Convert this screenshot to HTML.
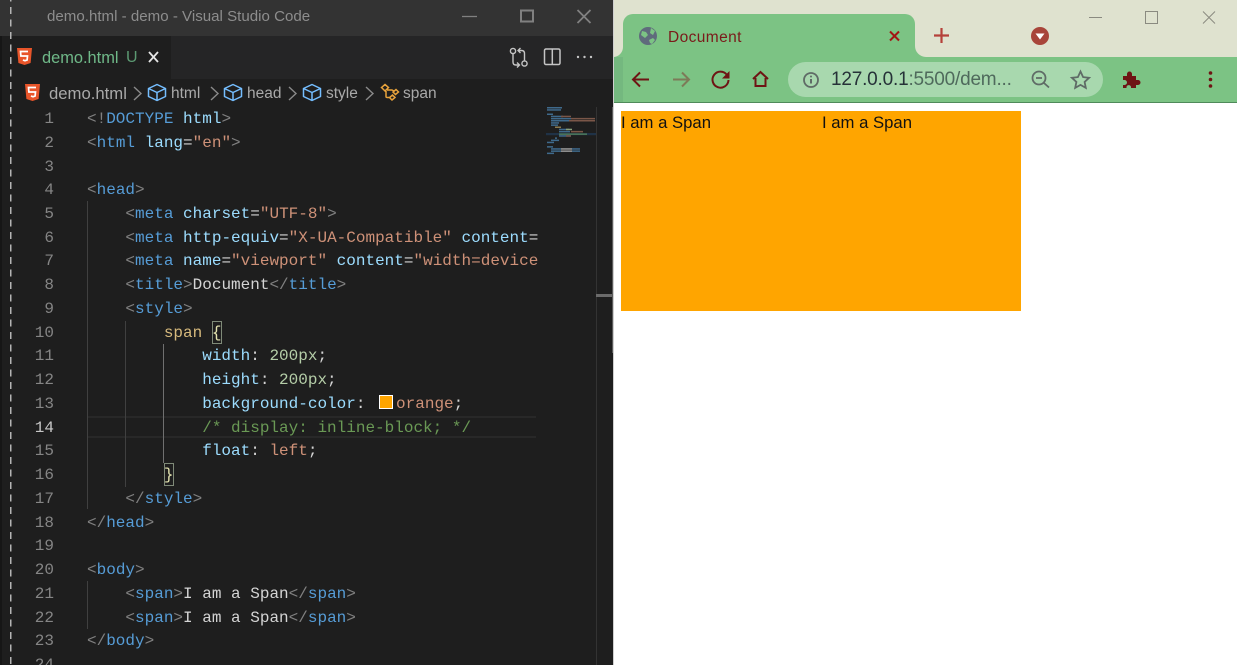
<!DOCTYPE html>
<html><head><meta charset="utf-8"><style>
*{margin:0;padding:0;box-sizing:border-box}
html,body{width:1237px;height:665px;overflow:hidden;background:#fff;font-family:"Liberation Sans",sans-serif}
.a{position:absolute}
#code{position:absolute;left:87px;top:1px;width:451px;height:664px;overflow:hidden;font:16px/24px "Liberation Mono",monospace;color:#d4d4d4;white-space:pre}
#code div{position:absolute;left:0;height:24px}
.n{position:absolute;width:30px;left:24px;margin-top:1px;text-align:right;font:16px/24px "Liberation Mono",monospace;color:#858585}
.g{color:#808080}.t{color:#569cd6}.at{color:#9cdcfe}.s{color:#ce9178}.y{color:#d7ba7d}.w{color:#d4d4d4}.m{color:#b5cea8}.c{color:#6a9955}.x{color:#4fc1ff}
.ui{white-space:nowrap;color:#a9a9a9}
</style></head><body>
<div class="a" style="left:0;top:0;width:613px;height:665px;background:#1e1e1e;overflow:hidden">
<div class="a" style="left:0;top:0;width:613px;height:36px;background:#333"></div>
<div class="a" style="left:0;top:36px;width:613px;height:43px;background:#252526"></div>
<div class="a" style="left:0;top:36px;width:171px;height:43px;background:#1e1e1e"></div>
<div class="a" style="left:0;top:36px;width:2px;height:629px;background:#161616"></div>
<div class="a ui" style="left:47px;top:8px;font-size:15.100px;line-height:18px;color:#8d8d8d">demo.html - demo - Visual Studio Code</div>
<svg class="a" style="left:0;top:0" width="613" height="80" fill="none">
<path d="M462 16.500h15" stroke="#808080" stroke-width="1.300"/>
<rect x="521" y="10.500" width="12" height="11" stroke="#808080" stroke-width="2"/>
<path d="M577.500 10l13 13M590.500 10l-13 13" stroke="#808080" stroke-width="1.800"/>
<path d="M17 48h15l-1.400 15-6.100 2-6.100-2z" fill="#e8552a"/>
<path d="M28 51.500h-7.500l.4 4.500h6.600l-.4 4-2.100.7-2.100-.7" stroke="#fff" stroke-width="1.700"/>
<path d="M149 52l9 10M158 52l-9 10" stroke="#e6e6e6" stroke-width="1.800"/>
<circle cx="513" cy="51" r="2.600" stroke="#c5c5c5" stroke-width="1.400"/><circle cx="524.500" cy="63.500" r="2.600" stroke="#c5c5c5" stroke-width="1.400"/>
<path d="M513 54v8q0 3 3 3h3M517 62.500l2.500 2.500-2.500 2.500M524.500 60.500v-7q0-3-3-3h-3M520.500 48l-2.500 2.500 2.500 2.500" stroke="#c5c5c5" stroke-width="1.400"/>
<rect x="544.500" y="49" width="15.500" height="15.500" rx="1.500" stroke="#c5c5c5" stroke-width="1.500"/><path d="M552.300 49v15" stroke="#c5c5c5" stroke-width="1.500"/>
<circle cx="578" cy="57" r="1.200" fill="#c5c5c5"/><circle cx="584.500" cy="57" r="1.200" fill="#c5c5c5"/><circle cx="591" cy="57" r="1.200" fill="#c5c5c5"/>
</svg>
<div class="a ui" style="left:42px;top:48px;font-size:16.400px;line-height:20px;color:#6fb888">demo.html</div>
<div class="a ui" style="left:126px;top:48px;font-size:16px;line-height:20px;color:#5c9a72">U</div>
<div class="a ui" style="left:49px;top:84px;font-size:16.700px;line-height:20px">demo.html</div>
<div class="a ui" style="left:171px;top:84px;font-size:15.500px;line-height:20px">html</div>
<div class="a ui" style="left:247px;top:84px;font-size:15.500px;line-height:20px">head</div>
<div class="a ui" style="left:326px;top:84px;font-size:15.500px;line-height:20px">style</div>
<div class="a ui" style="left:403px;top:84px;font-size:15.500px;line-height:20px">span</div>
<svg class="a" style="left:0;top:80px" width="450" height="30" fill="none">
<path d="M25 4h15l-1.400 15-6.100 2-6.100-2z" fill="#e8552a"/>
<path d="M36 7.500h-7.500l.4 4.500h6.600l-.4 4-2.100.7-2.100-.7" stroke="#fff" stroke-width="1.700"/>
<g stroke="#8a8a8a" stroke-width="1.400"><path d="M134 7l7 6.500-7 6.500M211 7l7 6.500-7 6.500M289 7l7 6.500-7 6.500M366 7l7 6.500-7 6.500"/></g>
<g stroke="#75beff" stroke-width="1.500" stroke-linejoin="round"><path d="M157 4.500l8.500 4v8l-8.500 4-8.500-4v-8zM148.500 8.500l8.500 4 8.500-4M157 12.500v8"/>
<path d="M233 4.500l8.500 4v8l-8.500 4-8.500-4v-8zM224.500 8.500l8.500 4 8.500-4M233 12.500v8"/>
<path d="M312 4.500l8.500 4v8l-8.500 4-8.500-4v-8zM303.500 8.500l8.500 4 8.500-4M312 12.500v8"/></g>
<g stroke="#e8a33c" stroke-width="1.500"><path d="M385 4.500l3.500 3-3.500 3.500-3.500-3.500zM396 9.500l2.500 2.500-3 2.500-2.500-2.500zM392.500 15l2.500 2.500-3 2.500-2.500-2.500zM387 10h5l2 1M386 11v5.500q0 1 1.500 1H390"/></g>
</svg>
<div class="a" style="left:88px;top:416px;width:448px;height:22px;border-top:2px solid #282828;border-bottom:2px solid #282828"></div>
<div class="a" style="left:87px;top:201px;width:1px;height:308px;background:#404040"></div>
<div class="a" style="left:87px;top:581px;width:1px;height:48px;background:#404040"></div>
<div class="a" style="left:125px;top:321px;width:1px;height:166px;background:#404040"></div>
<div class="a" style="left:163px;top:344px;width:1px;height:119px;background:#707070"></div>
<div class="a" style="left:212px;top:321px;width:10px;height:23px;border:1px solid #7f8a78"></div>
<div class="a" style="left:164px;top:463px;width:10px;height:23px;border:1px solid #7f8a78"></div>
<div id="code">
<div style="top:106px"><span class="g">&lt;!</span><span class="t">DOCTYPE</span> <span class="at">html</span><span class="g">&gt;</span></div>
<div style="top:130px"><span class="g">&lt;</span><span class="t">html</span> <span class="at">lang</span>=<span class="s">"en"</span><span class="g">&gt;</span></div>
<div style="top:177px"><span class="g">&lt;</span><span class="t">head</span><span class="g">&gt;</span></div>
<div style="top:201px">    <span class="g">&lt;</span><span class="t">meta</span> <span class="at">charset</span>=<span class="s">"UTF-8"</span><span class="g">&gt;</span></div>
<div style="top:225px">    <span class="g">&lt;</span><span class="t">meta</span> <span class="at">http-equiv</span>=<span class="s">"X-UA-Compatible"</span> <span class="at">content</span>=<span class="s">"IE=edge"</span></div>
<div style="top:248px">    <span class="g">&lt;</span><span class="t">meta</span> <span class="at">name</span>=<span class="s">"viewport"</span> <span class="at">content</span>=<span class="s">"width=device-width"</span></div>
<div style="top:272px">    <span class="g">&lt;</span><span class="t">title</span><span class="g">&gt;</span>Document<span class="g">&lt;/</span><span class="t">title</span><span class="g">&gt;</span></div>
<div style="top:296px">    <span class="g">&lt;</span><span class="t">style</span><span class="g">&gt;</span></div>
<div style="top:320px">        <span class="y">span</span> <span style="color:#e4e4b0">{</span></div>
<div style="top:343px">            <span class="at">width</span>: <span class="m">200px</span>;</div>
<div style="top:367px">            <span class="at">height</span>: <span class="m">200px</span>;</div>
<div style="top:391px">            <span class="at">background-color</span>: <span style="display:inline-block;width:14px;height:14px;background:orange;border:1px solid #fff;margin:0 3px 0 4px;vertical-align:-1px"></span><span class="s">orange</span>;</div>
<div style="top:415px">            <span class="c">/* display: inline-block; */</span></div>
<div style="top:438px">            <span class="at">float</span>: <span class="s">left</span>;</div>
<div style="top:462px">        <span style="color:#e4e4b0">}</span></div>
<div style="top:486px">    <span class="g">&lt;/</span><span class="t">style</span><span class="g">&gt;</span></div>
<div style="top:510px"><span class="g">&lt;/</span><span class="t">head</span><span class="g">&gt;</span></div>
<div style="top:557px"><span class="g">&lt;</span><span class="t">body</span><span class="g">&gt;</span></div>
<div style="top:581px">    <span class="g">&lt;</span><span class="t">span</span><span class="g">&gt;</span>I am a Span<span class="g">&lt;/</span><span class="t">span</span><span class="g">&gt;</span></div>
<div style="top:605px">    <span class="g">&lt;</span><span class="t">span</span><span class="g">&gt;</span>I am a Span<span class="g">&lt;/</span><span class="t">span</span><span class="g">&gt;</span></div>
<div style="top:628px"><span class="g">&lt;/</span><span class="t">body</span><span class="g">&gt;</span></div>
</div>
<div class="n" style="top:106px">1</div><div class="n" style="top:130px">2</div><div class="n" style="top:154px">3</div><div class="n" style="top:177px">4</div><div class="n" style="top:201px">5</div><div class="n" style="top:225px">6</div><div class="n" style="top:248px">7</div><div class="n" style="top:272px">8</div><div class="n" style="top:296px">9</div><div class="n" style="top:320px">10</div><div class="n" style="top:343px">11</div><div class="n" style="top:367px">12</div><div class="n" style="top:391px">13</div><div class="n" style="top:415px;color:#c6c6c6">14</div><div class="n" style="top:438px">15</div><div class="n" style="top:462px">16</div><div class="n" style="top:486px">17</div><div class="n" style="top:510px">18</div><div class="n" style="top:533px">19</div><div class="n" style="top:557px">20</div><div class="n" style="top:581px">21</div><div class="n" style="top:605px">22</div><div class="n" style="top:628px">23</div><div class="n" style="top:652px">24</div>
<svg class="a" style="left:546px;top:106px" width="50" height="56">
<rect x="0" y="27" width="50" height="2.200" fill="#1f3247"/>
<g fill="#3f6a8c">
<rect x="1" y="1" width="15" height="1.500"/><rect x="1" y="3.200" width="14" height="1.500"/>
<rect x="1" y="7.500" width="6" height="1.500"/>
<rect x="5" y="9.700" width="12" height="1.500"/><rect x="5" y="11.900" width="20" height="1.500"/><rect x="5" y="14" width="18" height="1.500"/>
<rect x="5" y="16.200" width="8" height="1.500"/><rect x="5" y="18.400" width="7" height="1.500"/>
<rect x="13" y="22.700" width="10" height="1.500"/><rect x="13" y="24.900" width="11" height="1.500"/>
<rect x="13" y="29.200" width="12" height="1.500"/>
<rect x="9" y="31.400" width="2" height="1.500"/><rect x="5" y="33.600" width="8" height="1.500"/><rect x="1" y="35.700" width="7" height="1.500"/>
<rect x="1" y="40.100" width="6" height="1.500"/><rect x="5" y="42.200" width="10" height="1.500"/><rect x="26" y="42.200" width="8" height="1.500"/><rect x="5" y="44.400" width="10" height="1.500"/><rect x="26" y="44.400" width="8" height="1.500"/><rect x="1" y="46.600" width="7" height="1.500"/>
</g>
<g fill="#7a5648"><rect x="15" y="9.700" width="10" height="1.500"/><rect x="25" y="11.900" width="24" height="1.500"/><rect x="23" y="14" width="26" height="1.500"/><rect x="20" y="29.200" width="5" height="1.500"/><rect x="25" y="24.900" width="12" height="1.500"/></g>
<g fill="#9a9a9a"><rect x="15" y="42.200" width="11" height="1.500"/><rect x="15" y="44.400" width="11" height="1.500"/></g>
<rect x="13" y="27.400" width="28" height="1.500" fill="#4d7a5a"/><rect x="9" y="20.500" width="6" height="1.500" fill="#8a7a50"/><rect x="20" y="22.700" width="6" height="1.500" fill="#8aa07a"/>
</svg>
<div class="a" style="left:596px;top:107px;width:1px;height:558px;background:#333"></div>
<div class="a" style="left:596px;top:294px;width:17px;height:3px;background:#6b6b6b"></div>
<div class="a" style="left:612px;top:107px;width:1px;height:246px;background:#5a5a5a"></div>
<svg class="a" style="left:0;top:0" width="14" height="665"><line x1="10.750" y1="0" x2="10.750" y2="665" stroke="#b4b4b4" stroke-width="1.500" stroke-dasharray="7 5.500" stroke-dashoffset="-7"/></svg>
</div>
<div class="a" style="left:613px;top:0;width:624px;height:103px;background:#dfe2cf;overflow:hidden">
<div class="a" style="left:0;top:57px;width:624px;height:46px;background:#7cc384"></div>
<div class="a" style="left:0;top:57px;width:10px;height:46px;background:#74b87f"></div>
<div class="a" style="left:0;top:102px;width:624px;height:1px;background:#4f8a5a"></div>
<div class="a" style="left:10px;top:14px;width:292px;height:50px;background:#7cc384;border-radius:10px 10px 0 0"></div>
<svg class="a" style="left:0;top:0" width="324" height="70"><path d="M302 46v11h11a11 11 0 0 1-11-11zM10 45v12H0a10 10 0 0 0 10-10z" fill="#7cc384"/></svg>
<div class="a" style="left:175px;top:62px;width:315px;height:35px;background:#a8d8ae;border-radius:18px"></div>
<div class="a ui" style="left:55px;top:29px;font-size:15.500px;letter-spacing:.4px;line-height:18px;color:#7a1a1a">Document</div>
<div class="a ui" style="left:218px;top:68px;font-size:19px;letter-spacing:-.2px;line-height:24px;color:#333"><span style="color:#263238">127.0.0.1</span><span style="color:#4f6a5c">:5500/dem...</span></div>
</div>
<svg class="a" style="left:613px;top:0" width="624" height="103" fill="none">
<circle cx="35" cy="36" r="9" fill="#5f6b7c"/><path d="M29 31l4 1 2 3-3 3-4-3zM38 28l4 3-2 4-3-2zM36 40l4-2 2 2-3 4-2-1z" fill="#7cc384"/>
<path d="M277 31.500l9 9M286 31.500l-9 9" stroke="#a31515" stroke-width="2"/>
<path d="M321 35.500h15M328.500 28v15" stroke="#b5413a" stroke-width="2.200"/>
<circle cx="427" cy="36" r="9" fill="#a8453a"/><path d="M422.500 33.500h9l-4.500 6z" fill="#fff"/>
<path d="M476 17.500h13" stroke="#8a8a80" stroke-width="1"/>
<rect x="532.500" y="11.500" width="12" height="12" stroke="#8a8a80" stroke-width="1"/>
<path d="M590 11.500l12 12M602 11.500l-12 12" stroke="#8a8a80" stroke-width="1"/>
<path d="M36 79.500H20M27 72.500l-7 7 7 7" stroke="#6e1414" stroke-width="2"/>
<path d="M76 79.500H60M69 72.500l7 7-7 7" stroke="#7d7a58" stroke-width="2"/>
<path d="M114 75a8 8 0 1 0 1.500 5" stroke="#6e1414" stroke-width="2"/><path d="M116.500 71v7.500H109z" fill="#6e1414"/>
<path d="M140 79l7.500-7 7.500 7M142.500 78v8h10v-8" stroke="#6e1414" stroke-width="2"/>
<circle cx="198" cy="80" r="7" stroke="#5f6b66" stroke-width="1.800"/><path d="M198 79v4.500" stroke="#5f6b66" stroke-width="2"/><circle cx="198" cy="76.500" r="1" fill="#5f6b66"/>
<circle cx="426" cy="78" r="6.500" stroke="#5f6b66" stroke-width="1.800"/><path d="M423 78h6M431 83l5 4.500" stroke="#5f6b66" stroke-width="1.800"/>
<path d="M467.500 71.500l2.600 5.600 6 .7-4.500 4.100 1.200 6-5.300-3-5.300 3 1.200-6-4.500-4.100 6-.7z" stroke="#5f6b66" stroke-width="1.800"/>
<path d="M510 76h4v-2a2.500 2.500 0 0 1 5 0v2h4v4h2a2.500 2.500 0 0 1 0 5h-2v3h-5v-1a2.300 2.300 0 0 0-4.500 0v1h-3.500v-3h1.500a2.500 2.500 0 0 0 0-5H510z" fill="#6e1414"/>
<circle cx="597.500" cy="73" r="1.800" fill="#6e1414"/><circle cx="597.500" cy="79.500" r="1.800" fill="#6e1414"/><circle cx="597.500" cy="86" r="1.800" fill="#6e1414"/>
</svg>
<div class="a" style="left:613px;top:0;width:1px;height:665px;background:#cfcfcf"></div>
<div class="a" style="left:621px;top:111px;width:400px;height:200px;background:orange"></div>
<div class="a" style="left:621px;top:113px;font-size:16.700px;line-height:20px;color:#111;white-space:nowrap">I am a Span</div>
<div class="a" style="left:822px;top:113px;font-size:16.700px;line-height:20px;color:#111;white-space:nowrap">I am a Span</div>
</body></html>
